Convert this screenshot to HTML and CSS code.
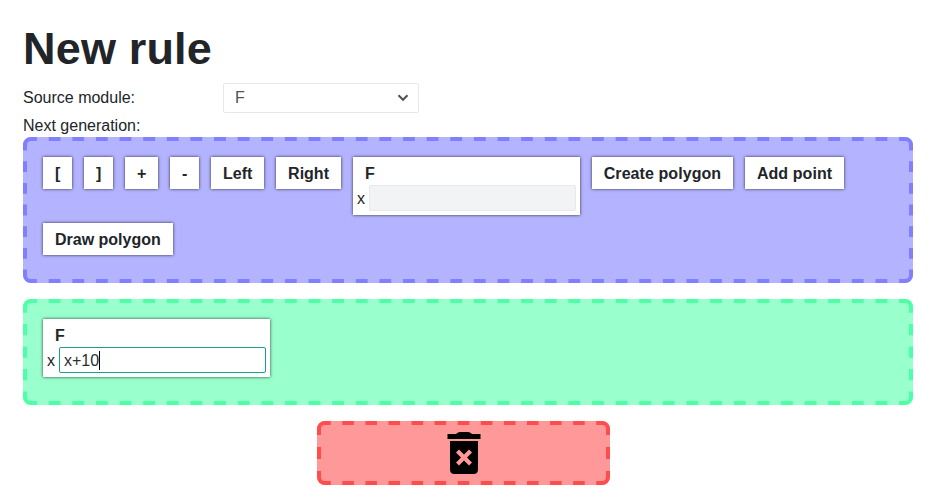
FILE: index.html
```html
<!DOCTYPE html>
<html lang="en">
<head>
<meta charset="utf-8">
<title>New rule</title>
<link rel="stylesheet" href="styles.css">
</head>
<body>
<h1>New rule</h1>
<div class="row">
  <span class="label">Source module:</span>
  <div class="select"><span>F</span>
    <svg width="12" height="8" viewBox="0 0 12 8"><path d="M1.5 1.3 6 5.8 10.5 1.3" fill="none" stroke="#4b5459" stroke-width="2"/></svg>
  </div>
</div>
<div class="next">Next generation:</div>
<div class="zone palette">
  <svg class="outline" width="890" height="146">
    <path d="M2 8A6 6 0 0 1 8 2M882 2A6 6 0 0 1 888 8M888 138A6 6 0 0 1 882 144M8 144A6 6 0 0 1 2 138"/>
    <path d="M8 2H882M8 144H882" stroke-dasharray="11.811" stroke-dashoffset="5.905"/>
    <path d="M2 8V138M888 8V138" stroke-dasharray="10.833" stroke-dashoffset="5.417"/>
  </svg>
  <div class="card">[</div>
  <div class="card">]</div>
  <div class="card">+</div>
  <div class="card">-</div>
  <div class="card">Left</div>
  <div class="card">Right</div>
  <div class="card module">F
    <div class="param"><span>x</span><div class="field disabled"></div></div>
  </div>
  <div class="card wide">Create polygon</div>
  <div class="card wide">Add point</div>
  <div class="card">Draw polygon</div>
</div>
<div class="zone result">
  <svg class="outline" width="890" height="106">
    <path d="M2 8A6 6 0 0 1 8 2M882 2A6 6 0 0 1 888 8M888 98A6 6 0 0 1 882 104M8 104A6 6 0 0 1 2 98"/>
    <path d="M8 2H882M8 104H882" stroke-dasharray="11.811" stroke-dashoffset="5.905"/>
    <path d="M2 8V98M888 8V98" stroke-dasharray="11.25" stroke-dashoffset="5.625"/>
  </svg>
  <div class="card module">F
    <div class="param"><span>x</span><div class="field focused">x+10<i class="caret"></i></div></div>
  </div>
</div>
<div class="zone trash">
  <svg class="outline" width="293" height="64">
    <path d="M2 8A6 6 0 0 1 8 2M285 2A6 6 0 0 1 291 8M291 56A6 6 0 0 1 285 62M8 62A6 6 0 0 1 2 56"/>
    <path d="M8 2H285M8 62H285" stroke-dasharray="11.542" stroke-dashoffset="5.771"/>
    <path d="M2 8V56M291 8V56" stroke-dasharray="12" stroke-dashoffset="6"/>
  </svg>
  <svg width="34" height="42" viewBox="0 0 34 42" fill="#000">
    <path d="M.5 2H9Q11 0 13 0H21Q23 0 25 2H33.500V7H.5z"/>
    <path fill-rule="evenodd" d="M3 9H31V37.500Q31 42 26.500 42H7.500Q3 42 3 37.500zM12 17.500 9 20.500 14 25.500 9 30.500 12 33.500 17 28.500 22 33.500 25 30.500 20 25.500 25 20.500 22 17.500 17 22.500z"/>
  </svg>
</div>
</body>
</html>
```
FILE: styles.css
```css
* { box-sizing: border-box; }
body {
  margin: 0;
  padding: 23px 21px 0 23px;
  font: 16px/24px "Liberation Sans", Arial, sans-serif;
  color: #212529;
  background: #fff;
  overflow: hidden;
}
h1 { margin: 0; height: 60px; font-size: 45px; line-height: 52px; font-weight: 700; letter-spacing: .18px; }
.row { display: flex; align-items: center; height: 30px; }
.label { width: 200px; }
.select {
  display: flex; align-items: center; justify-content: space-between;
  width: 196px; height: 30px; padding: 0 9px 0 11px;
  border: 1px solid #e6e8e9; border-radius: 2px; color: #4b5459;
}
.next { height: 24px; line-height: 25px; }
.zone { position: relative; border-radius: 8px; }
.outline { position: absolute; top: 0; left: 0; fill: none; stroke: currentColor; stroke-width: 4; }
.palette, .result { display: flex; flex-wrap: wrap; align-items: flex-start; padding: 20px 20px 0; }
.palette { height: 146px; column-gap: 11.7px; align-content: flex-start; background: #b3b3ff; color: #8080ff; }
.result { height: 106px; margin-top: 16px; background: #99ffcc; color: #4dffa6; }
.card {
  height: 32px; padding: 0 12px; line-height: 34px; font-weight: 700; color: #212529;
  background: #fff; box-shadow: 0 0 3px rgba(0, 0, 0, .75);
}
.wide { letter-spacing: .07px; }
.module { width: 227px; height: 58px; margin-bottom: 8px; }
.palette .module { margin-left: .4px; }
.param { display: flex; align-items: center; height: 26px; margin: -6px -8px 0; font-weight: 400; }
.param span { width: 12px; height: 26px; line-height: 28px; }
.field {
  display: flex; align-items: center; flex: none;
  width: 207px; height: 26px; padding: 0 4px;
  border: 1px solid #e6e8e9; border-radius: 2px; line-height: 26px; color: #292f34;
}
.disabled { background: #f1f3f5; }
.focused { border-color: #16a085; padding-top: 2px; }
.caret { width: 1px; height: 19px; margin-top: -2px; background: #000; }
.trash {
  display: flex; justify-content: center; align-items: center;
  width: 293px; height: 64px; margin: 16px 0 0 294px;
  background: #ff9999; color: #ff4d4d;
}
```
